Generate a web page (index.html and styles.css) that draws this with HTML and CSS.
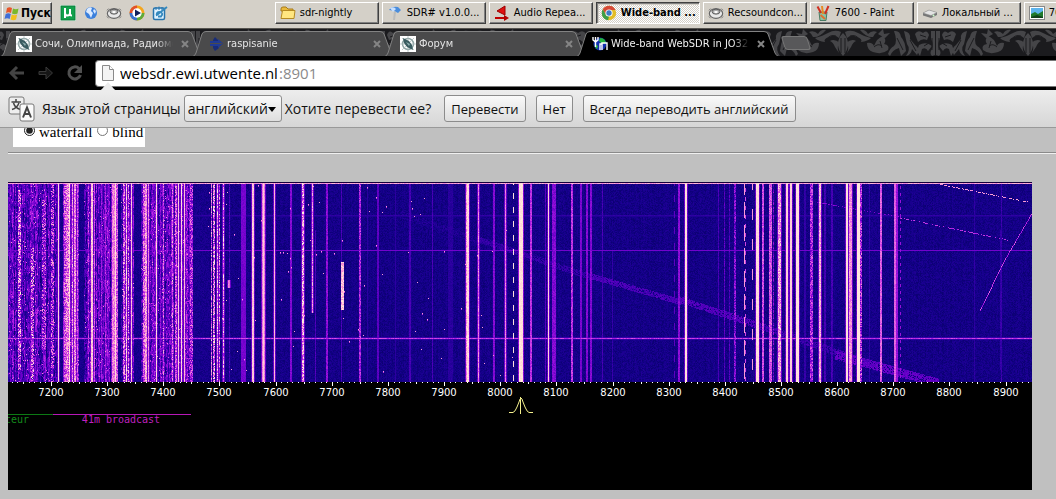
FILE: index.html
```html
<!DOCTYPE html>
<html lang="ru">
<head>
<meta charset="utf-8">
<title>Wide-band WebSDR in JO32KF</title>
<link rel="stylesheet" href="styles.css">
</head>
<body>
<svg class="defs" aria-hidden="true">
  <defs>
    <pattern id="damask" width="185" height="28" x="843" patternUnits="userSpaceOnUse">
      <rect width="185" height="28" fill="#1b1b1e"/>
      <g id="motif" fill="#454548">
        <path d="M0 4Q5 9 5 15T0 27ZM3 14Q9 9 13 12Q10 13 8 18L4 24Q7 17 3 14ZM2 3Q8 0 15 4T28 9Q25 12 18 13Q20 10 14 8Q8 5 4 9Z"/>
        <path d="M17 1Q22 0 25 5Q29 1 34 3Q31 5 30 8Q24 9 17 1ZM24 14Q29 13 31 17Q34 9 40 7Q44 11 41 15Q47 16 45 21Q39 26 30 23Q24 21 24 14ZM35 5L40 0L41 5L47 4L42 9Z"/>
        <path d="M51 2Q57 1 58 8Q62 12 63 22L58 27L56 19Q49 21 47 27L45 25Q47 19 51 17Q55 13 51 2ZM61 2Q68 3 67 10L72 16Q78 20 74 26L69 20Q68 26 63 27Q68 20 64 15Z"/>
        <path d="M72 5Q75 0 80 4Q84 0 86 6L84 11Q79 9 75 13ZM76 16Q83 12 89 17L85 22Q83 18 79 20L77 27L74 22ZM88 2H92V26L89 27Q86 24 89 20Q91 15 88 10Z"/>
      </g>
      <g fill="none" stroke="#1b1b1e"><path d="M2 9V24M7 7Q13 5 17 11M31 18Q35 14 39 17M37 12L39 19M54 9L60 21M67 11L73 22M77 6L83 8M86 14L81 17M89 9V21"/></g>
      <g transform="matrix(-1 0 0 1 185 0)">
        <use href="#motif"/>
        <g fill="none" stroke="#1b1b1e"><path d="M2 9V24M7 7Q13 5 17 11M31 18Q35 14 39 17M37 12L39 19M54 9L60 21M67 11L73 22M77 6L83 8M86 14L81 17M89 9V21"/></g>
      </g>
    </pattern>
    <pattern id="dither" width="2" height="2" patternUnits="userSpaceOnUse"><rect width="2" height="2" fill="#fff"/><path d="M0 0h1v1h-1zM1 1h1v1h-1z" fill="#d4d0c8"/></pattern>
    <symbol id="tabshape" viewBox="0 0 204 26" preserveAspectRatio="none"><path d="M0 26Q3 25 4 22L10 3Q11 .5 14 .5H188Q191 .5 192 3L199 22Q200 25 204 26Z"/></symbol>
    <symbol id="x" viewBox="0 0 8 8"><path d="M1 1L7 7M7 1L1 7" stroke="currentColor" stroke-width="2"/></symbol>
    <symbol id="compass" viewBox="0 0 16 16"><rect width="16" height="16" fill="#fff"/><circle cx="8" cy="8" r="5.500" fill="none" stroke="#8fa5a5" stroke-width="1.500"/><path d="M8 0V16M0 8H16M2 2L14 14M14 2L2 14" stroke="#a9b9b9" stroke-width=".7"/><path d="M3 2L9 5L12 9L13 14L7 11L4 7Z" fill="#3a5c60"/><path d="M6 6L10 8L9 10Z" fill="#8fb0b0"/></symbol>
    <symbol id="ring" viewBox="0 0 18 16"><ellipse cx="9" cy="8.500" rx="7.500" ry="5.500" fill="#e8e8e8" stroke="#666" stroke-width="1.300"/><ellipse cx="9" cy="6.500" rx="4.500" ry="2.800" fill="#aaa" stroke="#555"/><ellipse cx="9" cy="7" rx="2.200" ry="1.300" fill="#fff"/><path d="M1 5L3 3M17 5L15 3M1 12L3 14M17 12L15 14" stroke="#777"/></symbol>
  </defs>
</svg>

<header class="taskbar">
  <button class="start" type="button">
    <svg width="16" height="15" viewBox="0 0 16 15"><path d="M3 2Q5.500 .5 8 2L7 7Q4.500 5.500 2 7Z" fill="#e8562a"/><path d="M9 2.500Q12 4 14.500 2.500L13.500 7.500Q11 9 8 7.500Z" fill="#7ab82c"/><path d="M1.700 8Q4.500 6.500 6.800 8L5.700 13Q3 11.500 .5 13Z" fill="#3f6fd8"/><path d="M7.700 8.500Q10.500 10 13.200 8.500L12 13.500Q9.500 15 6.600 13.500Z" fill="#f2c01c"/></svg>
    Пуск
  </button>
  <nav class="quick" aria-label="Quick launch">
    <svg viewBox="0 0 16 16"><rect x=".5" y=".5" width="15" height="15" fill="#12a14b" stroke="#fff"/><rect x="1" y="1" width="14" height="14" fill="none" stroke="#0b7d38"/><path d="M5 3V13M5 8Q5 10.500 7.500 10.500T10 8V4V9Q10 10.500 12 10.500" fill="none" stroke="#fff" stroke-width="2"/></svg>
    <svg viewBox="0 0 16 16"><circle cx="8" cy="8" r="6" fill="#3a7fdc"/><path d="M4 4Q7 1 9 3L8 6L10 8L8 13L6 9L3 7ZM11 4L13 6L12 9L10 6Z" fill="#dbeaff"/></svg>
    <svg viewBox="0 0 18 16"><use href="#ring"/></svg>
    <svg viewBox="0 0 16 16"><circle cx="8" cy="8" r="7.500" fill="#f4a51c"/><path d="M8 .5A7.500 7.500 0 0 0 .5 8H8Z" fill="#e2502a"/><path d="M.5 8A7.500 7.500 0 0 0 8 15.500V8Z" fill="#3a71d0"/><path d="M8 15.500A7.500 7.500 0 0 0 15.500 8H8Z" fill="#5faa3a"/><circle cx="8" cy="8" r="4.700" fill="#fff"/><path d="M6 4.500L12 8L6 11.500Z" fill="#10205c"/></svg>
    <svg viewBox="0 0 16 16"><rect x="1.500" y="3" width="11" height="11.500" rx="1.500" fill="#dff2ff" stroke="#2774ad" stroke-width="1.500"/><path d="M4 2V5M7 1.500V5M10 2V5" stroke="#2774ad"/><path d="M5 11Q3.500 7 8 7Q12 8 9 11.500H6M5.500 9.500L15 2" fill="none" stroke="#3388bd" stroke-width="1.800"/></svg>
  </nav>
  <nav class="tasks" aria-label="Tasks">
    <button type="button"><svg viewBox="0 0 16 16"><path d="M1 4Q1 2 3 2H6L8 4H13V6H1Z" fill="#e9b93c" stroke="#a87b18"/><path d="M1 13.500L2.500 5.500H15L14 13.500Z" fill="#ffe680" stroke="#b58a22"/></svg>sdr-nightly</button>
    <button type="button"><svg viewBox="0 0 16 16"><path d="M2 5Q5 1 11 2L14 5L11 8Q7 5 2 5Z" fill="#4b8ddb"/><path d="M3 3Q7 1 9 4L6 7Z" fill="#c8e0ff"/><path d="M7 6L9 7L8 15H6Z" fill="#bbb"/></svg>SDR# v1.0.0...</button>
    <button type="button"><svg viewBox="0 0 16 16"><path d="M3 6L11 1V10Z" fill="#e01010" stroke="#900"/><path d="M1 13H13" stroke="#c00000" stroke-width="2"/><path d="M10 10L15 13L10 16Z" fill="#b00000"/></svg>Audio Repea...</button>
    <button type="button" class="current" aria-pressed="true"><svg class="fill"><rect width="100%" height="100%" fill="url(#dither)"/></svg><svg viewBox="0 0 16 16"><circle cx="8" cy="8" r="7.200" fill="#e3bd25"/><path d="M8 .8A7.200 7.200 0 0 1 14.500 5H8L5 10L1.800 4.300A7.200 7.200 0 0 1 8 .8Z" fill="#d64a38"/><path d="M1.800 4.300L5 10L8 11.500L7 15.200A7.200 7.200 0 0 1 1.800 4.300Z" fill="#3f9e48"/><circle cx="8" cy="8" r="3.600" fill="#fff"/><circle cx="8" cy="8" r="2.700" fill="#3e7cc4"/></svg><span>Wide-band ...</span></button>
    <button type="button"><svg viewBox="0 0 18 16"><use href="#ring"/></svg>Recsoundcon...</button>
    <button type="button"><svg viewBox="0 0 16 16"><path d="M4 7H12L11 15.500H5Z" fill="#8bc4a4" stroke="#497a63"/><path d="M6 8L2.500 1.500" stroke="#d03020" stroke-width="2"/><path d="M8 9L7 1" stroke="#e88a20" stroke-width="2"/><path d="M10 9L13.500 1" stroke="#d03020" stroke-width="2"/><path d="M5.500 10L10 14" stroke="#e07030" stroke-width="2"/></svg>7600 - Paint</button>
    <button type="button"><svg viewBox="0 0 16 16"><path d="M1 8L7 5L15 7.500V10L9 13L1 10.500Z" fill="#777"/><path d="M1 8L7 5L15 7.500L9 10.500Z" fill="#e4e4e4" stroke="#888" stroke-width=".5"/><circle cx="11.500" cy="10.500" r="1" fill="#cfc"/></svg>Локальный ...</button>
    <button type="button"><svg viewBox="0 0 16 16"><rect x=".5" y="1.500" width="15" height="13" fill="#fff" stroke="#888"/><rect x="2" y="3" width="12" height="10" fill="#5db4ec"/><path d="M2 9L6 7L9 9L14 6V13H2Z" fill="#1f7a2c"/><path d="M2 12L8 10L14 12V13H2Z" fill="#11401c"/></svg>7600</button>
  </nav>
</header>

<div class="strip">
  <svg class="damask" aria-hidden="true"><rect width="100%" height="100%" fill="url(#damask)"/></svg>
  <div class="tabs">
    <div class="tab"><svg class="shape"><use href="#tabshape"/></svg><svg class="fav"><use href="#compass"/></svg><a href="#sochi">Сочи, Олимпиада, Радиомобиль</a><button type="button" aria-label="Закрыть"><svg><use href="#x"/></svg></button></div>
    <div class="tab"><svg class="shape"><use href="#tabshape"/></svg><svg class="fav" viewBox="0 0 16 16"><path d="M7 1L11 5V12L7 15L5 12V4Z" fill="#182c78"/><path d="M2 5H10V3L15 7.500L10 12V10H2Z" fill="#203a94"/><path d="M1 7.500H14" stroke="#4a4a4a"/></svg><a href="#raspisanie">raspisanie</a><button type="button" aria-label="Закрыть"><svg><use href="#x"/></svg></button></div>
    <div class="tab"><svg class="shape"><use href="#tabshape"/></svg><svg class="fav"><use href="#compass"/></svg><a href="#forum">Форум</a><button type="button" aria-label="Закрыть"><svg><use href="#x"/></svg></button></div>
    <div class="tab active"><svg class="shape"><use href="#tabshape"/></svg><svg class="fav" viewBox="0 0 16 16"><circle cx="8" cy="8" r="6.500" fill="#1230b0"/><path d="M8 2Q13 2 14 7L10 8L7 5ZM3 8L6 10L5 13Q2 11 3 8Z" fill="#22b43c"/><path d="M1 1V4L3.500 6L6 4V1M3.500 1V11M8 14V8H10M10 14V7H15V14" fill="none" stroke="#fff" stroke-width="1.400"/></svg><a href="#waterfall">Wide-band WebSDR in JO32KF</a><button type="button" aria-label="Закрыть"><svg><use href="#x"/></svg></button></div>
    <button type="button" class="newtab" aria-label="Новая вкладка"></button>
  </div>
</div>

<div class="toolbar">
  <button type="button" aria-label="Назад"><svg viewBox="0 0 18 18"><path d="M9 3L3 9L9 15M3 9H16" fill="none" stroke="#444" stroke-width="3"/></svg></button>
  <button type="button" aria-label="Вперёд"><svg viewBox="0 0 18 18"><path d="M2 7.500H9V3L15.500 9L9 15V10.500H2Z" fill="#161616" stroke="#3a3a3a"/></svg></button>
  <button type="button" aria-label="Обновить"><svg viewBox="0 0 18 18"><path d="M14.500 11A6 6 0 1 1 13 4.500" fill="none" stroke="#505050" stroke-width="3"/><path d="M16 1V9H8Z" fill="#505050"/></svg></button>
  <label class="omnibox">
    <svg viewBox="0 0 12 16"><path d="M.5 .5H7.500L11.500 4.500V15.500H.5Z" fill="#f4f4f4" stroke="#8a8a8a"/><path d="M7.500 .5V4.500H11.500" fill="#fff" stroke="#8a8a8a"/></svg>
    <input type="text" value="websdr.ewi.utwente.nl" aria-label="Адрес"><span>:8901</span>
  </label>
</div>

<div class="infobar">
  <svg class="bump" viewBox="0 0 22 10"><path d="M0 10Q3 9 5 7L11 0L17 7Q19 9 22 10Z" fill="#ececec"/></svg>
  <svg class="translate" viewBox="0 0 27 26"><rect x="1" y="1" width="15" height="17" rx="2" fill="#eee" stroke="#777"/><path d="M8 3V5.500M3.500 6H13M5.500 7Q7 12 12.500 13.500M11 7Q9 12 4 13.500" fill="none" stroke="#444" stroke-width="1.500"/><rect x="12" y="8" width="14" height="17" rx="2" fill="#fafafa" stroke="#777"/><path d="M15 21.500L19 11.500L23 21.500M16.500 18H21.500" fill="none" stroke="#444" stroke-width="2"/></svg>
  <label for="lang">Язык этой страницы</label>
  <span class="pick"><select id="lang"><option>английский</option></select><svg viewBox="0 0 8 5"><path d="M0 0H8L4 5Z"/></svg></span>
  <span class="ask">Хотите перевести ее?</span>
  <button type="button">Перевести</button>
  <button type="button">Нет</button>
  <button type="button">Всегда переводить английский</button>
</div>

<main>
  <div class="clip">
    <fieldset class="view">
      <label><input type="radio" name="view" checked> waterfall</label>
      <label><input type="radio" name="view"> blind</label>
    </fieldset>
  </div>
  <hr>
  <section class="sdr">
    <canvas id="waterfall" width="1024" height="205" role="img" aria-label="Waterfall"></canvas>
    <svg class="scale" viewBox="0 0 1024 103">
      <g class="freq" id="freq"></g>
      <g class="band">
        <path d="M0 27.500H45" stroke="#0c7a14"/><path d="M45 27.500H183" stroke="#b818b8"/>
        <text x="21" y="36" text-anchor="end" fill="#148a1c">amateur</text>
        <text x="113" y="36" text-anchor="middle" fill="#c020c0">41m broadcast</text>
      </g>
      <path d="M501 25.500H505Q507 25 509 20L511 15Q512 11 513 11T515 15L517 20Q519 25 521 25.500H525M512.500 10V27" fill="none" stroke="#f4f08c"/>
    </svg>
  </section>
</main>
<script src="waterfall.js"></script>
</body>
</html>
```

FILE: styles.css
```css
* { box-sizing: border-box; }
body { margin: 0; min-height: 100vh; background: #c0c0c0; overflow: hidden; }
button { font: inherit; color: inherit; margin: 0; padding: 0; border: 0; background: none; white-space: nowrap; }
svg { display: block; flex: none; }
.defs { position: absolute; width: 0; height: 0; }

.taskbar { display: flex; align-items: flex-start; height: 29px; padding: 2px 0 0 2px; overflow: hidden; background: #d4d0c8; border-bottom: 1px solid #55534f; font: 11px/14px "DejaVu Sans Condensed", "DejaVu Sans", sans-serif; color: #000; }
.start, .tasks button { display: flex; align-items: center; gap: 4px; height: 22px; border: 1px solid; border-color: #fff #404040 #404040 #fff; box-shadow: inset -1px -1px #808080; background: #d4d0c8; }
.start { width: 51px; padding-left: 1px; gap: 1px; font-weight: bold; font-size: 12px; }
.quick { display: flex; gap: 7px; padding: 3px 0 0 8px; width: 223px; flex: none; }
.quick svg { width: 16px; height: 16px; }
.tasks { display: flex; gap: 3px; }
.tasks button { position: relative; flex: none; width: 104px; padding-left: 4px; overflow: hidden; }
.tasks svg { width: 16px; height: 16px; }
.tasks .current { border-color: #404040 #fff #fff #404040; box-shadow: inset 1px 1px #808080; font-weight: bold; }
.tasks .fill { position: absolute; inset: 2px 0 0 2px; width: 100%; height: 100%; }
.tasks .current > :not(.fill) { position: relative; }

.strip { position: relative; height: 28px; background: #1b1b1e; border-bottom: 1px solid #000; overflow: hidden; }
.damask { position: absolute; inset: 0; width: 100%; height: 100%; }
.tabs { position: relative; display: flex; padding-top: 2px; }
.tab { position: relative; display: flex; align-items: center; flex: none; width: 204px; height: 26px; margin-right: -12px; padding: 0 15px 1px 16px; font: 11px/14px "DejaVu Sans Condensed", "DejaVu Sans", sans-serif; color: #e4e4e4; }
.shape { position: absolute; inset: 0; width: 204px; height: 26px; fill: #4a4a4b; stroke: #828282; }
.active { z-index: 1; color: #f0f0f0; }
.active .shape { fill: #000; }
.tab > :not(.shape) { position: relative; }
.fav { width: 16px; height: 16px; }
.tab a { flex: 1; margin: 0 8px 0 3px; overflow: hidden; white-space: nowrap; color: inherit; text-decoration: none; mask-image: linear-gradient(90deg, #000 88%, transparent); }
.tab button { color: #858585; }
.tab button svg { width: 8px; height: 8px; }
.newtab { width: 26px; height: 14px; margin: 5px 0 0 15px; background: #58585a; border: 1px solid #777; border-radius: 3px; transform: skewX(18deg); }

.toolbar { display: flex; align-items: center; gap: 11px; height: 33px; padding: 0 0 2px 8px; background: #000; }
.toolbar button svg { width: 18px; height: 18px; }
.omnibox { display: flex; align-items: center; flex: 1; height: 27px; margin: 2px 0 0; padding: 0 0 2px 6px; background: #fff; border: 1px solid #777; border-right: 0; border-radius: 4px 0 0 4px; font: 15px/20px "Open Sans", sans-serif; color: #8a8a8a; }
.omnibox svg { width: 12px; height: 16px; }
.omnibox input { width: 159px; margin-left: 6px; padding: 0; border: 0; outline: 0; background: none; font: inherit; color: #000; }

.infobar { position: relative; display: flex; align-items: center; height: 38px; padding: 0 8px; background: linear-gradient(#ededed, #d6d6d6); border-bottom: 1px solid #999; font: 14px/18px "Open Sans", sans-serif; color: #111; white-space: nowrap; }
.bump { position: absolute; left: 97px; top: -8px; width: 22px; height: 10px; }
.translate { width: 27px; height: 26px; margin-right: 7px; }
.pick { position: relative; margin: 0 3px; }
.pick svg { position: absolute; right: 6px; top: 12px; width: 8px; height: 5px; }
.infobar select, .infobar button { height: 27px; border: 1px solid #8c8c8c; border-radius: 3px; background: linear-gradient(#fafafa, #dedede); font: inherit; color: #111; }
.infobar select { width: 98px; padding: 0 3px; appearance: none; }
.ask { margin-right: 3px; }
.infobar button { margin-left: 10px; padding: 0 6px; font-size: 13px; }

main { padding-left: 8px; }
.clip { display: flex; align-items: flex-end; height: 19px; overflow: hidden; }
.view { display: flex; gap: 5px; margin: 0 0 0 5px; padding: 6px 2px 6px 11px; border: 0; background: #fff; font: 15px/18px "Liberation Serif", serif; }
.view label { display: flex; align-items: center; gap: 4px; }
.view input { width: 11px; height: 11px; margin: 0 0 4px; accent-color: #222; }
hr { margin: 5px 0 28px; border: 0; border-top: 1px solid #8a8a8a; border-bottom: 1px solid #f0f0f0; }
.sdr { max-width: 1024px; margin-right: 8px; background: #000; }
canvas { display: block; width: 100%; }
.scale { width: 100%; height: auto; overflow: hidden; }
.freq { fill: #fff; font: 10px "DejaVu Sans", sans-serif; text-anchor: middle; }
.band { font: 10px "DejaVu Sans Mono", monospace; }
```

FILE: waterfall.js
```js
const W = 1024, H = 200, FULL = 205, LEFT = 8, TOP = 182;
const ctx = document.getElementById("waterfall").getContext("2d");
const v = new Float32Array(W * H);

let seed = 7600;
function rnd() {
  seed = (seed * 1664525 + 1013904223) >>> 0;
  return seed / 4294967296;
}

const stops = [
  [0, 0, 0, 80], [0.15, 20, 0, 138], [0.3, 54, 0, 170], [0.45, 110, 0, 204],
  [0.6, 170, 25, 225], [0.75, 225, 90, 228], [0.87, 255, 165, 210], [1, 255, 240, 222]
];
function colour(t) {
  t = Math.max(0, Math.min(1, t));
  let i = 1;
  while (t > stops[i][0]) i++;
  const a = stops[i - 1], b = stops[i], k = (t - a[0]) / (b[0] - a[0]);
  return [1, 2, 3].map(c => a[c] + (b[c] - a[c]) * k);
}

function raise(x, y, level) {
  if (x < 0 || y < 0 || x >= W || y >= H) return;
  const i = y * W + x;
  if (v[i] < level) v[i] = level;
}

// noise floor, denser in the broadcast band
const dark = [[192, 210], [225, 229], [60, 63], [79, 84], [118, 121], [134, 141]];
for (let x = 0; x < W; x++) {
  const sx = x + LEFT;
  const busy = sx < 192;
  const quiet = dark.some(d => sx >= d[0] && sx < d[1]);
  const base = quiet ? 0.16 : busy ? 0.24 + rnd() * 0.26 : 0.13 + rnd() * 0.03;
  let run = 0;
  for (let y = 0; y < H; y++) {
    if (busy && rnd() < 0.4) run = (rnd() - 0.5) * 0.34;
    v[y * W + x] = base + (quiet ? 0 : run) + (rnd() - 0.5) * 0.1;
    if (busy && !quiet && rnd() < 0.02) v[y * W + x] = 0.65 + rnd() * 0.2;
  }
}

// carriers: x, width, level, jitter, first row, last row
const lines = [
  [18,3,.68,.7,190,370],[31,3,.6,.8,248,382],[42,4,.5,.8,200,350],[51,3,.55,.7],[58,1,.95,.05],
  [64,2,.7,.4],[66,3,.78,.4],[69,1,.95,.2],[72,1,.8,.4],[74,2,.82,.3],[77,1,.7,.3],
  [88,1,.6,.4],[91,2,.92,.15],[94,1,.7,.2],[101,1,.55,.2],[105,1,.6,.2],[108,1,.5,.2],
  [112,3,.8,.2],[115,1,.95,.1],[116,2,.7,.3],[123,2,.7,.5],[126,1,.92,.3],[128,1,.7,.6],[131,1,.92,.1],
  [143,2,.72,.4],[145,2,.85,.25],[148,1,.8,.2],[152,1,.5,.3],[156,1,.95,.1],[160,1,.5,.2],[163,1,.7,.4],
  [172,1,.75,.4],[175,2,.68,.4],[178,1,.92,.1],[181,1,.95,.1],[184,1,.9,.1],[187,1,.5,.4],[190,3,.6,.5],
  [211,1,.7,.5],[213,2,.75,.6],[217,1,.85,.4],[219,1,.7,.6],[223,1,.8,.5],[229,1,.35,.2],[228,2,.8,.1,280,288],
  [241,5,.47,.06],[252,2,.92,.1],[262,3,.8,.1],[263,1,.93,.05],[274,1,.9,.05],[290,2,.5,.1],
  [302,2,.85,.5],[312,1,.8,.3,182,313],[315,1,.36,.1,230,382],[326,2,.52,.15],[341,1,.35,.1],
  [359,2,.6,.3],[367,1,.25,.05],[377,2,.4,.08],[395,1,.25,.05],[409,2,.34,.08],[432,1,.34,.08],[448,5,.24,.08],
  [466,3,.85,.2],[467,2,.95,.1],[478,1,.8,.2],[493,2,.5,.1],[505,1,.8,.15],[518,6,.52,.1],[519,4,.97,.05],
  [530,2,.65,.15],[545,1,.38,.1],[548,1,.95,.03],[552,4,.5,.12],[571,2,.65,.2],[580,2,.48,.08],[586,2,.5,.1],
  [590,2,.5,.1],[602,1,.34,.1],[612,1,.28,.1,250,382],[678,2,.52,.12],[685,2,.97,.03],[718,1,.34,.1],
  [724,1,.38,.2],[729,1,.35,.2],[734,2,.48,.35],[756,3,.96,.05],[762,2,.7,.2],[769,3,.72,.2],[773,1,.4,.4],
  [778,3,.85,.3],[786,2,.94,.03],[790,2,.94,.03],[796,3,.97,.03],[804,2,.28,.08],[810,3,.6,.4],[819,2,.88,.2],
  [824,2,.33,.1],[831,2,.33,.1],[846,2,.97,.02],[849,3,.83,.15],[857,3,.98,.02],[860,2,.6,.5],[869,1,.28,.1],
  [880,2,.74,.15],[894,2,.75,.1],[896,2,.55,.08],[974,1,.26,.08],[1001,1,.3,.1],[1000,1,.28,.1,230,370]
];
for (const [sx, w, level, jitter, y0 = TOP, y1 = TOP + H] of lines) {
  for (let y = y0 - TOP; y < y1 - TOP; y++) {
    for (let k = 0; k < w; k++) raise(sx - LEFT + k, y, level + (rnd() - 0.5) * jitter);
    if (level > 0.78) {
      raise(sx - LEFT - 1, y, 0.38 + rnd() * 0.1);
      raise(sx - LEFT + w, y, 0.38 + rnd() * 0.1);
    }
  }
}

// dashed carriers: x, level, period, length of the mark
for (const [sx, level, period, on] of [[513,.97,14,6],[674,.4,16,7],[744,.85,23,16],[745,.7,9,4],[752,.85,30,11],[900,.55,7,3]])
  for (let y = 0; y < H; y++) if ((y + 3) % period < on) raise(sx - LEFT, y, level);

// short burst near 7715 kHz
for (let y = 80; y < 128; y++) for (let x = 333; x < 336; x++) raise(x, y, 0.8 + rnd() * 0.2);

// sweeps
function sweep(x0, y0, x1, y1, level, thick, gap) {
  for (let sx = x0; sx <= x1; sx++) {
    const y = y0 + (y1 - y0) * (sx - x0) / (x1 - x0) - TOP;
    for (let k = 0; k < thick; k++)
      if (rnd() > gap) raise(sx - LEFT, Math.round(y + k - thick / 2), level + (rnd() - 0.5) * 0.1);
  }
}
sweep(400, 214, 530, 258, 0.2, 7, 0.5);
sweep(480, 240, 590, 277, 0.28, 6, 0.3);
sweep(590, 276, 680, 302, 0.35, 6, 0.15);
sweep(680, 300, 760, 326, 0.37, 7, 0.2);
sweep(760, 326, 870, 364, 0.31, 7, 0.25);
sweep(835, 355, 938, 383, 0.41, 9, 0.15);
sweep(928, 182, 1032, 203, 0.85, 1, 0.35);
sweep(815, 202, 900, 217, 0.5, 1, 0.5);
sweep(900, 218, 1007, 240, 0.65, 1, 0.45);
function climb(x0, y0, x1, y1) {
  for (let y = y0; y <= y1; y++)
    raise(Math.round(x0 + (x1 - x0) * (y - y0) / (y1 - y0)) - LEFT, y - TOP, 0.5 + rnd() * 0.3);
}
climb(1031, 214, 1003, 262);
climb(1003, 262, 980, 310);

// pulses across the whole band
for (let x = 0; x < W; x++) {
  raise(x, 1, 0.8 + rnd() * 0.12);
  raise(x, 68, 0.46);
  raise(x, 156, 0.58 + rnd() * 0.16);
  raise(x, 155, 0.3);
  raise(x, 157, 0.27);
  if (x > 185) { raise(x, 33, 0.23 + rnd() * 0.07); raise(x, 34, 0.2); }
}

// static
for (let i = 0; i < 85; i++) {
  const x = Math.floor(200 + rnd() * 310), y = Math.floor(rnd() * H);
  raise(x, y, 0.85);
  if (rnd() > 0.5) raise(x, y + 1, 0.65);
}

const img = ctx.createImageData(W, FULL);
for (let i = 0; i < W * FULL; i++) {
  const c = i < W * H && i >= W ? colour(v[i]) : i < W ? [20, 0, 60] : [0, 0, 0];
  img.data.set([c[0], c[1], c[2], 255], i * 4);
}
ctx.putImageData(img, 0, 0);

// frequency ticks every 10 kHz and the labels below them
const STEP = 5615;
const freq = document.getElementById("freq");
ctx.fillStyle = "#fff";
for (let f = -7; f <= 177; f++) {
  const x = Math.round(43 + f * STEP / 1000);
  ctx.fillRect(x, 200, 1, f % 10 === 0 ? 4 : f % 5 === 0 ? 2 : 1);
  if (f >= 0 && f % 10 === 0 && f <= 170) {
    const t = document.createElementNS("http://www.w3.org/2000/svg", "text");
    t.setAttribute("x", x);
    t.setAttribute("y", 9);
    t.textContent = 7200 + f * 10;
    freq.append(t);
  }
}
```
